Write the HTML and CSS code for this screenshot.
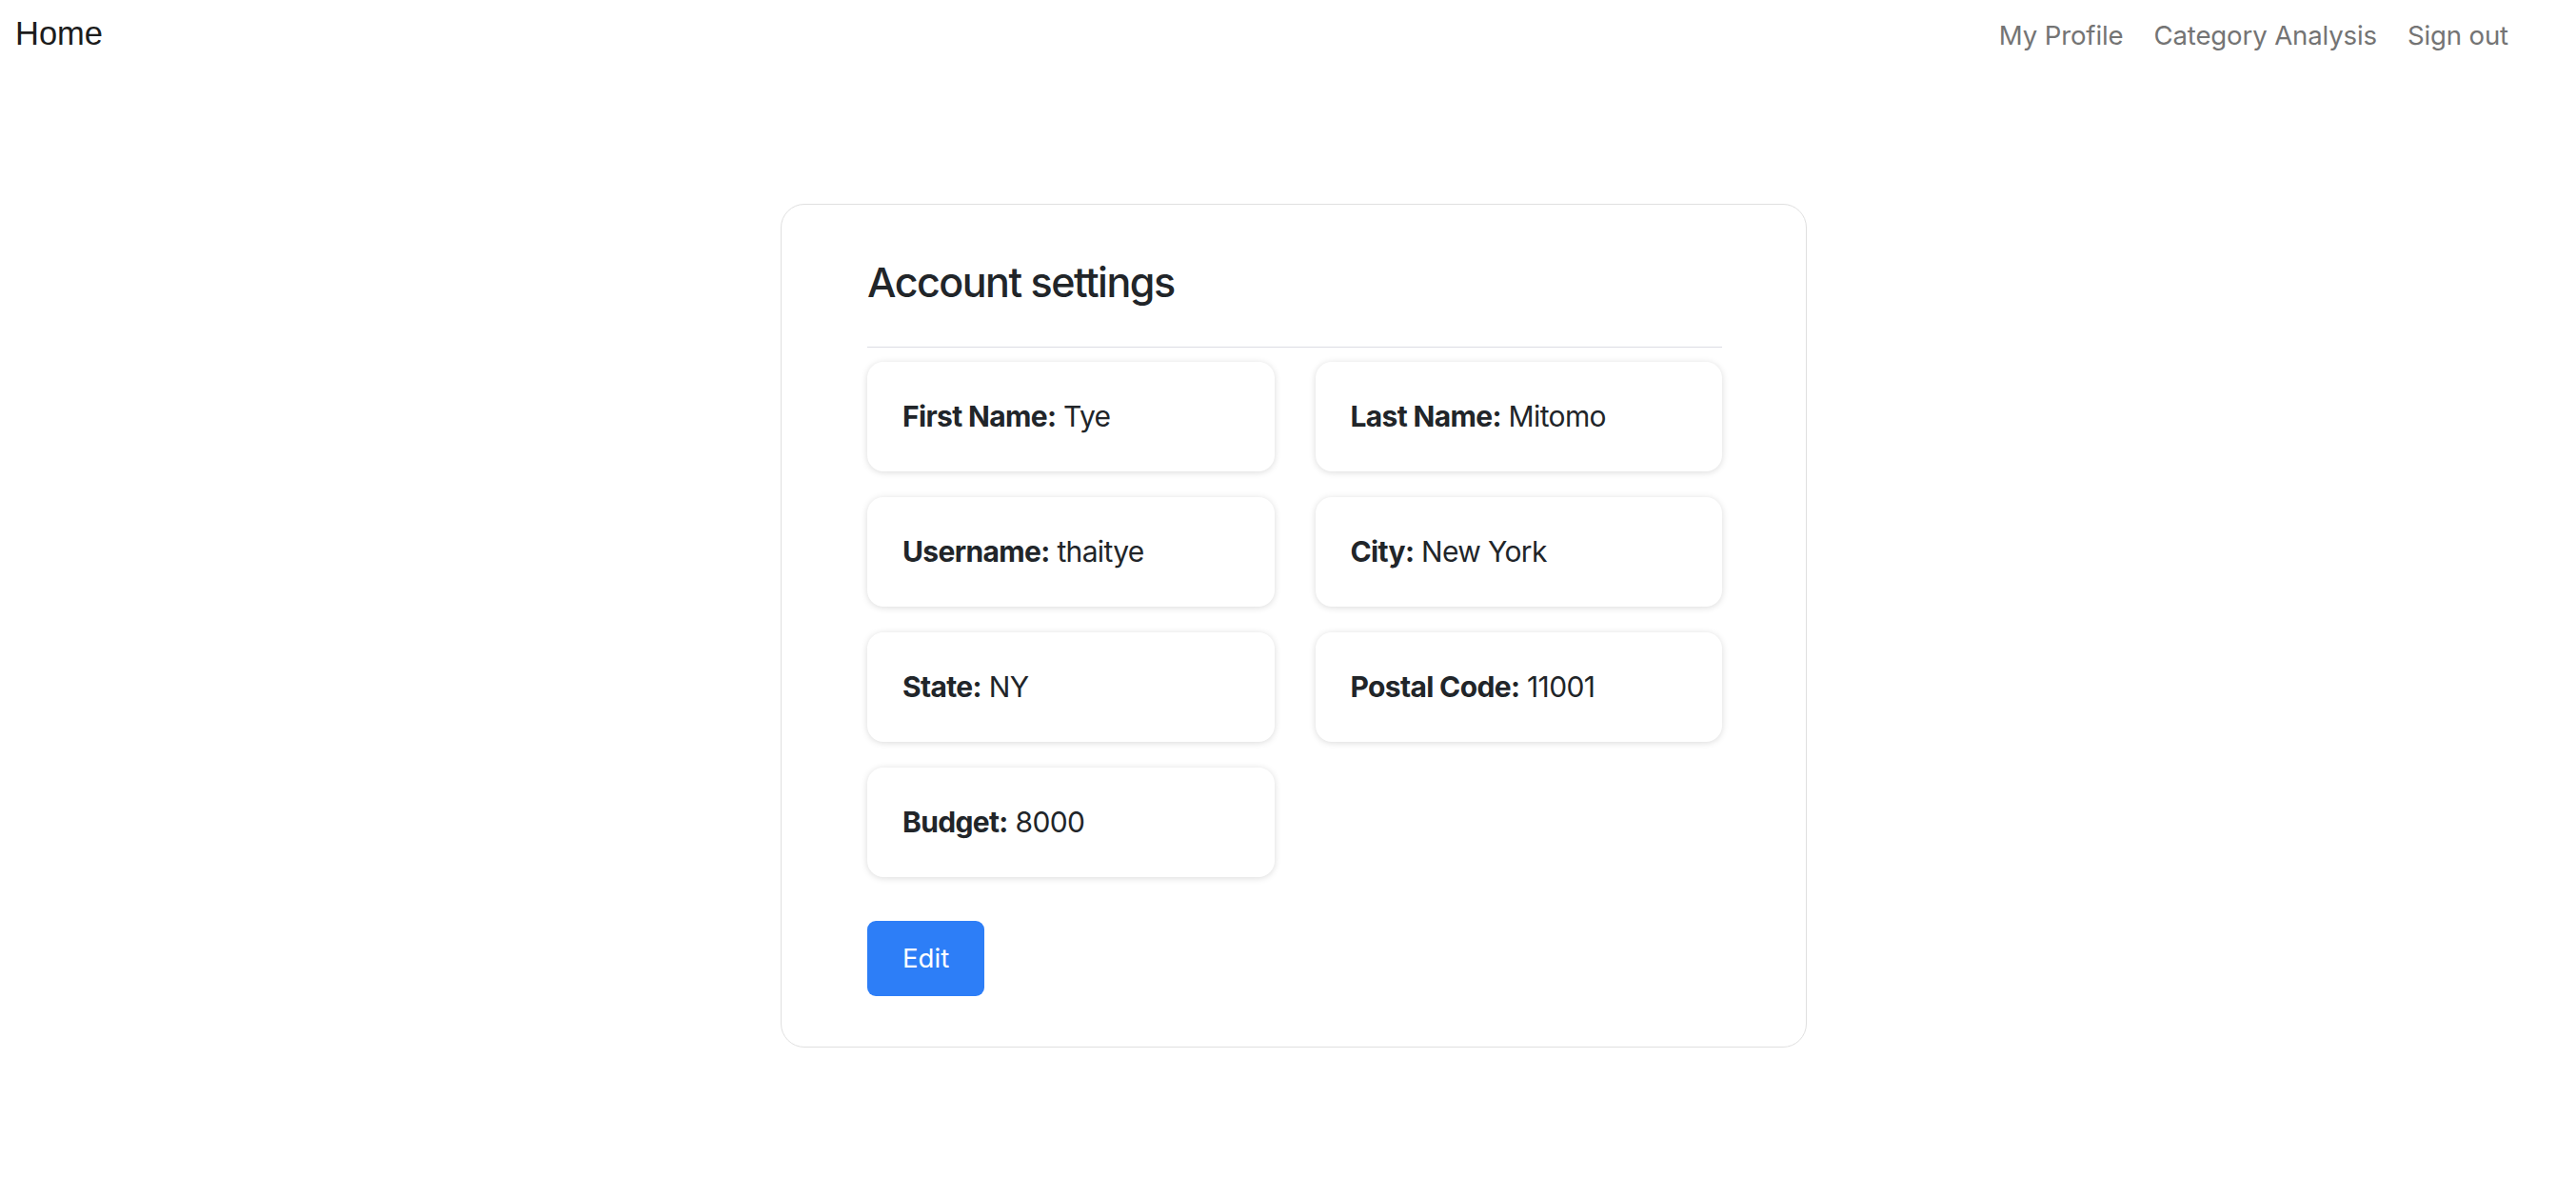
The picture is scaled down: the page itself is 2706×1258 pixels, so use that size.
FILE: index.html
```html
<!DOCTYPE html>
<html lang="en">
<head>
<meta charset="utf-8">
<title>Account settings</title>
<link rel="stylesheet" href="styles.css">
</head>
<body>
<nav class="navbar">
  <a class="brand" href="#">Home</a>
  <ul class="nav-links">
    <li><a href="#">My Profile</a></li>
    <li><a href="#">Category Analysis</a></li>
    <li><a href="#">Sign out</a></li>
  </ul>
</nav>
<main class="main">
  <section class="settings-card">
    <h3 class="settings-title">Account settings</h3>
    <hr class="divider">
    <div class="field-grid">
      <div class="field"><strong>First Name:</strong> Tye</div>
      <div class="field"><strong>Last Name:</strong> Mitomo</div>
      <div class="field"><strong>Username:</strong> thaitye</div>
      <div class="field"><strong>City:</strong> New York</div>
      <div class="field"><strong>State:</strong> NY</div>
      <div class="field"><strong>Postal Code:</strong> 11001</div>
      <div class="field"><strong>Budget:</strong> 8000</div>
    </div>
    <button class="btn-edit" type="button">Edit</button>
  </section>
</main>
</body>
</html>
```

FILE: styles.css
```css
* { box-sizing: border-box; }

html, body {
  margin: 0;
  padding: 0;
  background: #ffffff;
}

body {
  font-family: Inter, "Noto Sans", "Liberation Sans", sans-serif;
  color: #212529;
}

.navbar {
  display: flex;
  align-items: baseline;
  justify-content: space-between;
  padding: 9px 55px 0 16px;
  height: 70px;
}

.brand {
  font-family: "Liberation Sans", Arial, sans-serif;
  font-size: 34.5px;
  line-height: 52px;
  color: #1c1c1c;
  text-decoration: none;
}

.nav-links {
  display: flex;
  list-style: none;
  margin: 0;
  padding: 0;
}

.nav-links a {
  display: block;
  padding: 0 16px;
  font-size: 27.6px;
  line-height: 41px;
  letter-spacing: -0.15px;
  color: #747474;
  text-decoration: none;
}

.main {
  display: flex;
  justify-content: center;
  padding: 144px 0 0 12px;
}

.settings-card {
  width: 1078px;
  border: 1px solid #e0e0e0;
  border-radius: 25px;
  padding: 55px 88px 53px 90px;
  background: #fff;
}

.settings-title {
  margin: 0;
  font-size: 43px;
  line-height: 53px;
  font-weight: 500;
  letter-spacing: -1.5px;
  color: #212529;
}

.divider {
  margin: 41px 0 0;
  border: 0;
  border-top: 1px solid #dcdde3;
  height: 0;
}

.field-grid {
  display: grid;
  grid-template-columns: 1fr 1fr;
  column-gap: 43px;
  row-gap: 27px;
  margin-top: 15px;
}

.field {
  height: 115px;
  padding: 35px 37px;
  font-size: 30px;
  line-height: 45px;
  letter-spacing: -0.65px;
  border-radius: 17px;
  background: #fff;
  box-shadow: 0 1px 7px rgba(0, 0, 0, 0.15);
}

.field strong {
  font-weight: 700;
}

.btn-edit {
  display: block;
  margin-top: 46px;
  padding: 19px 37px;
  height: 79px;
  font-family: Inter, "Noto Sans", sans-serif;
  font-size: 27.6px;
  line-height: 41px;
  color: #fff;
  background: #2d7ef7;
  border: 0;
  border-radius: 9px;
}
```
